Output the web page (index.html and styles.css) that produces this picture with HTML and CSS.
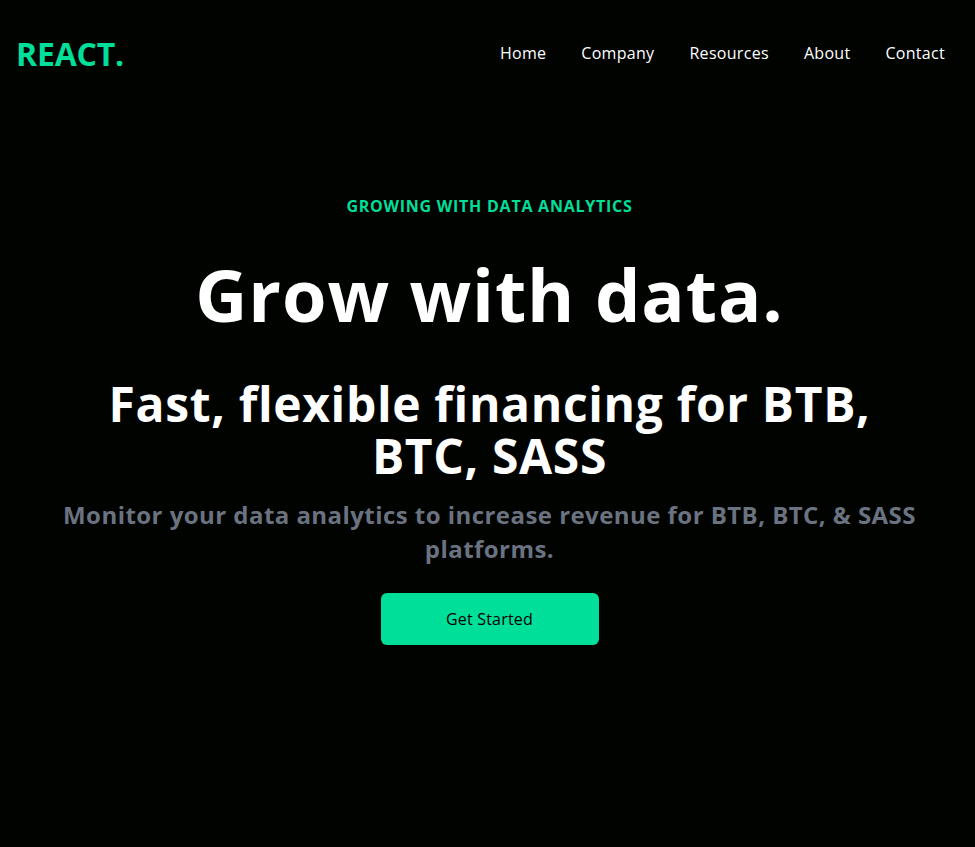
FILE: index.html
```
<!DOCTYPE html>
<html lang="en">
<head>
<meta charset="utf-8">
<title>React.</title>
<link rel="stylesheet" href="styles.css">
</head>
<body>
<header class="navbar">
  <h1 class="logo">REACT.</h1>
  <ul class="nav-links">
    <li>Home</li>
    <li>Company</li>
    <li>Resources</li>
    <li>About</li>
    <li>Contact</li>
  </ul>
</header>
<main class="hero">
  <p class="eyebrow">GROWING WITH DATA ANALYTICS</p>
  <h2 class="title">Grow with data.</h2>
  <p class="subtitle">Fast, flexible financing for BTB, BTC, SASS</p>
  <p class="lead">Monitor your data analytics to increase revenue for BTB, BTC, &amp; SASS platforms.</p>
  <button class="cta">Get Started</button>
</main>
</body>
</html>
```
FILE: styles.css
```
* { box-sizing: border-box; }
html, body { margin: 0; padding: 0; }
body {
  background: #000300;
  color: #fff;
  font-family: "Open Sans", "Noto Sans", sans-serif;
  height: 847px;
  overflow: hidden;
}
.navbar {
  height: 106px;
  display: flex;
  justify-content: space-between;
  align-items: center;
  padding: 0 30px 0 16px;
}
.logo {
  margin: 0;
  font-size: 32px;
  font-weight: 700;
  color: #00df9a;
  letter-spacing: -0.2px;
}
.nav-links {
  list-style: none;
  margin: 0;
  padding: 0;
  display: flex;
  gap: 35px;
  font-size: 16px;
  letter-spacing: 0.3px;
}
.hero {
  display: flex;
  flex-direction: column;
  align-items: center;
  text-align: center;
  padding: 88px 0 0 4px;
}
.eyebrow {
  margin: 0;
  color: #00df9a;
  font-weight: 700;
  font-size: 16px;
  line-height: 24px;
  letter-spacing: 0.75px;
}
.title {
  margin: 40px 0 0;
  font-size: 72px;
  line-height: 72px;
  font-weight: 700;
  letter-spacing: 0.9px;
}
.subtitle {
  margin: 48px 0 0;
  max-width: 820px;
  font-size: 48px;
  line-height: 52px;
  font-weight: 700;
  letter-spacing: 0.65px;
}
.lead {
  margin: 16px 0 0;
  max-width: 900px;
  font-size: 24px;
  line-height: 34px;
  font-weight: 700;
  color: #6b7280;
  letter-spacing: 0.45px;
}
.cta {
  margin-top: 27px;
  width: 218px;
  height: 52px;
  border: 0;
  border-radius: 6px;
  background: #00df9a;
  color: #000;
  font-family: inherit;
  font-size: 16px;
  font-weight: 500;
  letter-spacing: 0.2px;
}
```
